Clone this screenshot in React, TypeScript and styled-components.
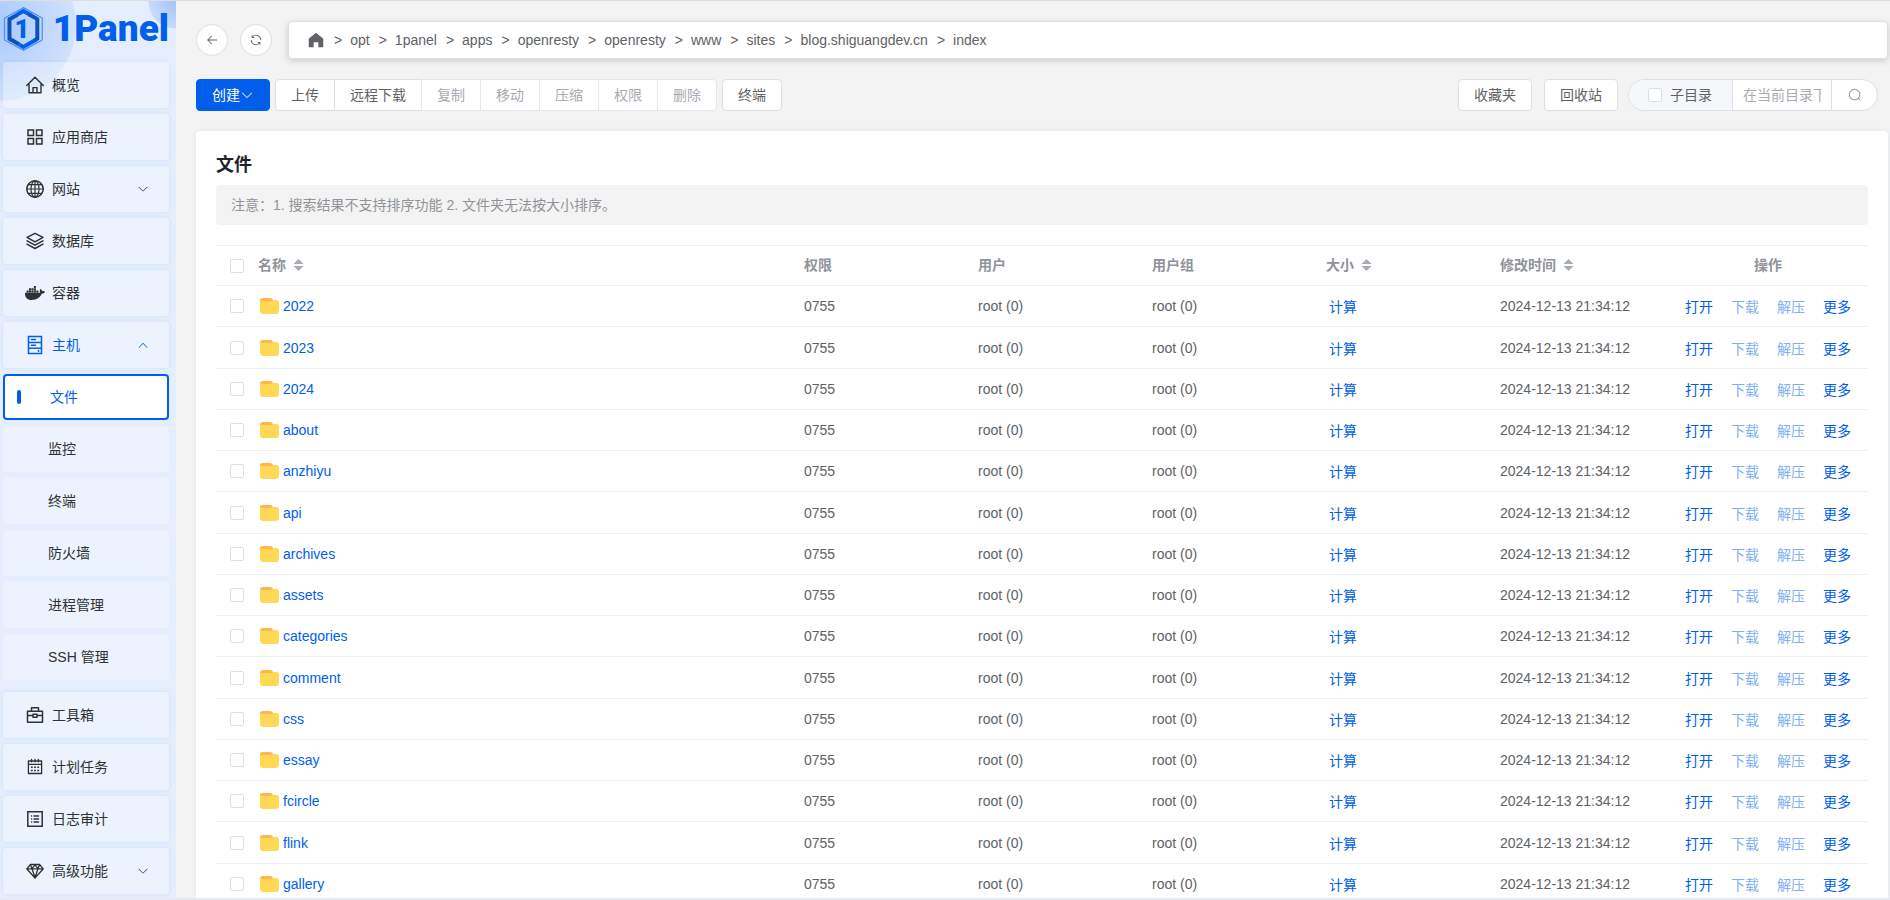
import React from "react";
import styled, { createGlobalStyle, css } from "styled-components";
import { FaDocker } from "react-icons/fa";

const BLUE = "#005eeb";
const BORDER = "#dcdfe6";
const LINE = "#ebeef5";
const TEXT = "#606266";

const GlobalStyle = createGlobalStyle`
  *, *::before, *::after { box-sizing: border-box; }
  body {
    margin: 0;
    background: #f3f3f3;
    color: ${TEXT};
    font: 14px/20px "Liberation Sans", "Noto Sans CJK SC", sans-serif;
  }
  button, input { font: inherit; color: inherit; }
  a { color: inherit; text-decoration: none; }
`;

/* ---------- shell ---------- */

const Shell = styled.div`
  display: flex;
  height: 100vh;
  overflow: hidden;
  border-top: 1px solid #dedede;
  border-bottom: 2px solid #e6e9f1;
`;

const Sidebar = styled.aside`
  flex: none;
  width: 176px;
  display: flex;
  flex-direction: column;
  padding: 0 7px 0 3px;
  background:
    radial-gradient(circle at 100% 0, rgba(110, 160, 248, 0.55), rgba(110, 160, 248, 0.25) 27px, transparent 28px) no-repeat,
    radial-gradient(circle at 0 24px, rgba(110, 165, 248, 0.5), rgba(110, 165, 248, 0.17) 75px, transparent 77px) no-repeat,
    #e4eefe;
`;

const Brand = styled.a`
  display: flex;
  align-items: center;
  gap: 9px;
  height: 55px;
  margin-bottom: 6px;
  color: ${BLUE};
  font: 900 37px/48px Roboto, "Liberation Sans", sans-serif;
`;

const Menu = styled.ul`
  display: flex;
  flex-direction: column;
  gap: 6px;
  margin: 0;
  padding: 0;
  list-style: none;
`;

const SubMenu = styled(Menu)`
  margin: 6px 0;
`;

const itemBase = css`
  display: flex;
  align-items: center;
  height: 46px;
  border-radius: 4px;
  background: rgba(255, 255, 255, 0.32);
  color: #303133;
`;

const MenuItem = styled.a<{ $open?: boolean }>`
  ${itemBase}
  padding: 0 20px 0 22px;
  box-shadow: 0 0 4px rgba(0, 94, 235, 0.1);
  ${(p) => p.$open && `color: ${BLUE};`}
  > svg:first-child { flex: none; margin-right: 7px; }
  > svg + span { flex: 1; }
`;

const SubItem = styled.a<{ $active?: boolean }>`
  ${itemBase}
  padding-left: 45px;
  ${(p) =>
    p.$active &&
    css`
      padding-left: 12px;
      border: 2px solid ${BLUE};
      background: #fff;
      color: ${BLUE};
      &::before {
        content: "";
        width: 4px;
        height: 14px;
        margin-right: 29px;
        border-radius: 2px;
        background: ${BLUE};
      }
    `}
`;

const Main = styled.main`
  flex: 1;
  min-width: 0;
  display: flex;
  flex-direction: column;
  padding: 20px 2px 0 20px;
`;

/* ---------- path bar ---------- */

const PathRow = styled.div`
  display: flex;
  align-items: center;
  gap: 12px;
`;

const RoundButton = styled.button`
  display: grid;
  place-items: center;
  width: 32px;
  height: 32px;
  padding: 0;
  border: 1px solid ${BORDER};
  border-radius: 50%;
  background: #fff;
`;

const Breadcrumb = styled.nav`
  flex: 1;
  display: flex;
  align-items: center;
  gap: 8px;
  height: 38px;
  margin-left: 4px;
  padding: 0 18px;
  border: 1px solid ${BORDER};
  border-radius: 4px;
  background: #fff;
  box-shadow: 0 2px 6px rgba(0, 0, 0, 0.16);
  svg { display: block; }
`;

const Separator = styled.span`
  padding-left: 1px;
`;

/* ---------- toolbar ---------- */

const Toolbar = styled.div`
  display: flex;
  justify-content: space-between;
  margin: 20px 10px 20px 0;
`;

const Group = styled.div<{ $gap: number }>`
  display: flex;
  gap: ${(p) => p.$gap}px;
`;

const Button = styled.button<{ $primary?: boolean }>`
  display: flex;
  align-items: center;
  justify-content: center;
  height: 32px;
  padding: 0 15px;
  border: 1px solid ${BORDER};
  border-radius: 4px;
  background: #fff;
  color: ${TEXT};
  &:disabled { color: #a8abb2; border-color: #e4e7ed; }
  ${(p) => p.$primary && `background: ${BLUE}; border-color: ${BLUE}; color: #fff;`}
`;

const Joined = styled.div`
  display: flex;
  ${Button} { border-radius: 0; }
  ${Button} + ${Button} { margin-left: -1px; }
  ${Button}:first-child { border-radius: 4px 0 0 4px; }
  ${Button}:last-child { border-radius: 0 4px 4px 0; }
`;

const SearchBox = styled.div`
  display: flex;
  width: 250px;
  height: 32px;
  margin-left: -2px;
  border: 1px solid ${BORDER};
  border-radius: 16px;
  background: #fff;
  overflow: hidden;
`;

const SubDir = styled.label`
  flex: none;
  display: flex;
  align-items: center;
  gap: 8px;
  padding: 0 20px 0 19px;
  border-right: 1px solid ${BORDER};
  background: #f5f7fa;
`;

const SearchInput = styled.input`
  flex: 1;
  min-width: 0;
  padding: 0 10px;
  border: 0;
  outline: 0;
  background: none;
  &::placeholder { color: #a8abb2; opacity: 1; }
`;

const SearchButton = styled.button`
  flex: 0 0 46px;
  display: grid;
  place-items: center;
  padding: 0;
  border: 0;
  border-left: 1px solid ${BORDER};
  background: none;
`;

const Check = styled.input.attrs({ type: "checkbox" })`
  display: block;
  appearance: none;
  width: 14px;
  height: 14px;
  margin: 0;
  border: 1px solid ${BORDER};
  border-radius: 2px;
  background: #fff;
  &:checked { background: ${BLUE}; border-color: ${BLUE}; }
`;

/* ---------- file card ---------- */

const Card = styled.section`
  flex: 1;
  min-height: 0;
  overflow: hidden;
  padding: 20px 20px 0;
  border-radius: 4px 4px 0 0;
  background: #fff;
  box-shadow: 0 0 4px rgba(0, 94, 235, 0.1);
`;

const Title = styled.h1`
  margin: 0 0 6px;
  color: #1f2329;
  font-size: 18px;
  line-height: 28px;
`;

const Note = styled.p`
  margin: 0 0 20px;
  padding: 10px 15px;
  border-radius: 4px;
  background: #f3f3f3;
  color: #909399;
`;

const Table = styled.table`
  width: 100%;
  table-layout: fixed;
  border-collapse: separate;
  border-spacing: 0;
  border-top: 1px solid ${LINE};

  th, td {
    height: 41px;
    padding: 0 12px;
    border-bottom: 1px solid ${LINE};
    text-align: left;
    white-space: nowrap;
  }
  th { height: 40px; padding-bottom: 2px; color: #909399; }
  tbody tr:nth-child(4n + 2) td { height: 42px; }
  th:first-child, td:first-child { padding: 0 0 0 14px; }
  th:last-child { text-align: center; }
`;

const Col = styled.col<{ $w?: number }>`
  ${(p) => p.$w && `width: ${p.$w}px;`}
`;

const HeadLabel = styled.span`
  display: flex;
  align-items: center;
  gap: 7px;
`;

const FileName = styled.a`
  display: flex;
  align-items: center;
  gap: 4px;
  padding-left: 2px;
  color: ${BLUE};
`;

const LinkButton = styled.button`
  padding: 2px 3px 0;
  border: 0;
  background: none;
  color: ${BLUE};
  &:disabled { color: #80aff5; }
`;

const Actions = styled.div`
  display: flex;
  justify-content: center;
  gap: 12px;
`;

/* ---------- icons ---------- */

const Glyph = ({ d, size = 14, color = "currentColor" }: { d: string; size?: number; color?: string }) => (
  <svg width={size} height={size} viewBox="0 0 1024 1024" fill={color} aria-hidden="true">
    <path d={d} />
  </svg>
);

const ARROW_LEFT =
  "M224 480h640a32 32 0 1 1 0 64H224a32 32 0 0 1 0-64z m13.248 32 265.408 265.344a32 32 0 0 1-45.312 45.312l-288-288a32 32 0 0 1 0-45.312l288-288a32 32 0 1 1 45.312 45.312L237.248 512z";
const REFRESH =
  "M771.776 794.88A384 384 0 0 1 128 512h64a320 320 0 0 0 555.712 216.448H654.72a32 32 0 1 1 0-64h149.056a32 32 0 0 1 32 32v148.928a32 32 0 1 1-64 0v-50.56zM276.288 295.616h92.992a32 32 0 0 1 0 64H220.16a32 32 0 0 1-32-32V178.56a32 32 0 0 1 64 0v50.56A384 384 0 0 1 896.128 512h-64a320 320 0 0 0-555.776-216.384z";
const ARROW_DOWN =
  "M831.872 340.864 512 652.672 192.128 340.864a30.592 30.592 0 0 0-42.752 0 29.12 29.12 0 0 0 0 41.6L489.664 714.24a32 32 0 0 0 44.672 0l340.288-331.712a29.12 29.12 0 0 0 0-41.728 30.592 30.592 0 0 0-42.752 0z";
const ARROW_UP =
  "m488.832 344.32-339.84 356.672a32 32 0 0 0 0 44.16l.384.384a29.44 29.44 0 0 0 42.688 0l320-335.872 319.872 335.872a29.44 29.44 0 0 0 42.688 0l.384-.384a32 32 0 0 0 0-44.16L535.168 344.32a32 32 0 0 0-46.336 0z";
const SEARCH =
  "m795.904 750.72 124.992 124.928a32 32 0 0 1-45.248 45.248L750.656 795.904a416 416 0 1 1 45.248-45.248zM480 832a352 352 0 1 0 0-704 352 352 0 0 0 0 704z";

const Line = ({ children, w = 1.3 }: { children: React.ReactNode; w?: number }) => (
  <svg width="20" height="20" viewBox="0 0 20 20" fill="none" stroke="currentColor" strokeWidth={w} strokeLinejoin="round" strokeLinecap="round" aria-hidden="true">
    {children}
  </svg>
);

const HomeIcon = () => (
  <Line w={1.4}>
    <path d="M1.7 10.6 10 2.2l8.3 8.4M4 9v8.8h12V9M8 17.6v-5h4v5" />
  </Line>
);
const AppsIcon = () => (
  <Line w={1.5}>
    <path strokeLinejoin="miter" d="M3 3h5.5v5.5H3zM11.5 3H17v5.5h-5.5zM3 11.5h5.5V17H3zM11.5 11.5H17V17h-5.5z" />
  </Line>
);
const GlobeIcon = () => (
  <Line w={1.2}>
    <circle cx="10" cy="10" r="8.2" strokeWidth="1.5" />
    <ellipse cx="10" cy="10" rx="4" ry="8.2" />
    <path d="M1.8 10h16.4M10 1.8v16.4M3.1 5.6h13.8M3.1 14.4h13.8" />
  </Line>
);
const LayersIcon = () => (
  <Line w={1.5}>
    <path d="M10 2.3 18 6.4 10 10.8 2 6.4zM2 9.9l8 4.3 8-4.3M2 13.2l8 4.3 8-4.3" />
  </Line>
);
const HostIcon = () => (
  <Line w={1.5}>
    <path strokeLinejoin="miter" d="M3.5 1.5h13v17h-13zM3.5 7.4h13M3.5 13.2h13M6.5 4.6h4M6.5 10.3h4" />
    <path d="M13.5 16h.1" strokeWidth="1.8" />
  </Line>
);
const ToolboxIcon = () => (
  <Line w={1.5}>
    <path d="M2.5 6.2h15v11h-15zM6.5 6V2.8h7V6M2.7 10.6h4.8M12.5 10.6h4.8M8 9.2h4v3H8z" />
  </Line>
);
const CalendarIcon = () => (
  <Line w={1.3}>
    <path d="M3.4 4h13.2v12.5H3.4zM3.4 7.4h13.2M6.6 2.4v2.4M10 2.4v2.4M13.4 2.4v2.4" />
    <path strokeWidth="1.6" strokeLinecap="butt" strokeDasharray="1.8 1.4" d="M5.9 10.3h8.4M5.9 13.5h8.4" />
  </Line>
);
const LogIcon = () => (
  <Line w={1.5}>
    <path strokeLinejoin="miter" d="M2.8 2.8h14.4v14.4H2.8z" />
    <path strokeWidth="1.3" d="M9 7h4.6M9 10h4.6M9 13h4.6M6.5 7h.2M6.5 10h.2M6.5 13h.2" />
  </Line>
);
const GemIcon = () => (
  <Line w={1.3}>
    <path d="M5.4 3.5h9.2l3.7 4.3L10 17 1.7 7.8zM1.9 7.8h16.2M5.4 3.8l1.6 4L10 16.5 13 7.8l1.6-4M7 7.6l3-3.8 3 3.8" />
  </Line>
);

const BrandMark = () => (
  <svg width="41" height="46" viewBox="0 0 41 46" fill="none" aria-hidden="true">
    <path d="M20.5 1.5 39.5 12v22L20.5 44.5 1.500 34V12z" stroke="#4a8cf2" strokeWidth="1.2" />
    <path d="M14.5 8.6 6.5 13.2V32.800l10 5.700" stroke="#0b52bd" strokeWidth="4" />
    <path d="M14 8.600 20.500 5l8 4.500" stroke={BLUE} strokeWidth="4" />
    <path d="M26 8.200 34.500 13v19.800L31 35" stroke="#0b52bd" strokeWidth="4" />
    <path d="M33.500 33.500 20.500 41l-4-2.300" stroke={BLUE} strokeWidth="4" />
    <text x="19" y="32" textAnchor="middle" fill={BLUE} fontFamily="Roboto" fontWeight="900" fontSize="26">1</text>
  </svg>
);

const FolderIcon = () => (
  <svg width="19" height="16" viewBox="0 0 19 16" aria-hidden="true">
    <path d="M0 3Q0 0 2.500 0H10q1.500 0 2.500 1.200L14 3v5H0z" fill="#ffb74d" />
    <path d="M0 3h11.500l1.500-1h3.500Q19 2 19 4.500V12.500q0 3.500-3 3.500H3q-3 0-3-3.500z" fill="#ffd955" />
  </svg>
);

const SortIcon = () => (
  <svg width="11" height="12" viewBox="0 0 11 12" fill="#a8abb2" aria-hidden="true">
    <path d="M5.500 0 10.500 5H.5zM5.500 12 .5 7h10z" />
  </svg>
);

/* ---------- data ---------- */

const topItems: { label: string; icon: React.ReactNode; arrow?: string; open?: boolean }[] = [
  { label: "概览", icon: <HomeIcon /> },
  { label: "应用商店", icon: <AppsIcon /> },
  { label: "网站", icon: <GlobeIcon />, arrow: ARROW_DOWN },
  { label: "数据库", icon: <LayersIcon /> },
  { label: "容器", icon: <FaDocker size={20} /> },
  { label: "主机", icon: <HostIcon />, arrow: ARROW_UP, open: true },
];
const hostItems = ["文件", "监控", "终端", "防火墙", "进程管理", "SSH 管理"];
const bottomItems = [
  { label: "工具箱", icon: <ToolboxIcon /> },
  { label: "计划任务", icon: <CalendarIcon /> },
  { label: "日志审计", icon: <LogIcon /> },
  { label: "高级功能", icon: <GemIcon />, arrow: ARROW_DOWN },
];
const crumbs = ["opt", "1panel", "apps", "openresty", "openresty", "www", "sites", "blog.shiguangdev.cn", "index"];
const batchActions = ["复制", "移动", "压缩", "权限", "删除"];
const files = [
  "2022", "2023", "2024", "about", "anzhiyu", "api", "archives", "assets",
  "categories", "comment", "css", "essay", "fcircle", "flink", "gallery",
];

const renderItem = (item: (typeof topItems)[number]) => (
  <MenuItem href="#" $open={item.open}>
    {item.icon}
    <span>{item.label}</span>
    {item.arrow && <Glyph d={item.arrow} size={12} />}
  </MenuItem>
);

export default function App() {
  return (
    <>
      <GlobalStyle />
      <Shell>
        <Sidebar>
          <Brand href="#">
            <BrandMark />
            <span>1Panel</span>
          </Brand>
          <Menu>
            {topItems.map((item) => (
              <li key={item.label}>
                {renderItem(item)}
                {item.open && (
                  <SubMenu>
                    {hostItems.map((label, i) => (
                      <li key={label}>
                        <SubItem href="#" $active={i === 0}>{label}</SubItem>
                      </li>
                    ))}
                  </SubMenu>
                )}
              </li>
            ))}
            {bottomItems.map((item) => (
              <li key={item.label}>{renderItem(item)}</li>
            ))}
          </Menu>
        </Sidebar>

        <Main>
          <PathRow>
            <RoundButton aria-label="返回"><Glyph d={ARROW_LEFT} /></RoundButton>
            <RoundButton aria-label="刷新"><Glyph d={REFRESH} /></RoundButton>
            <Breadcrumb>
              <a href="#" aria-label="根目录">
                <Glyph d="M512 100 100 440V930h280V640h264v290h280V440z" size={18} />
              </a>
              {crumbs.map((name, i) => (
                <React.Fragment key={i}>
                  <Separator>&gt;</Separator>
                  <a href="#">{name}</a>
                </React.Fragment>
              ))}
            </Breadcrumb>
          </PathRow>

          <Toolbar>
            <Group $gap={5}>
              <Button $primary>创建<Glyph d={ARROW_DOWN} /></Button>
              <Joined>
                <Button>上传</Button>
                <Button>远程下载</Button>
                {batchActions.map((label) => (
                  <Button key={label} disabled>{label}</Button>
                ))}
              </Joined>
              <Button>终端</Button>
            </Group>
            <Group $gap={12}>
              <Button>收藏夹</Button>
              <Button>回收站</Button>
              <SearchBox>
                <SubDir><Check />子目录</SubDir>
                <SearchInput aria-label="搜索" placeholder="在当前目录下查找" />
                <SearchButton aria-label="查找"><Glyph d={SEARCH} color="#909399" /></SearchButton>
              </SearchBox>
            </Group>
          </Toolbar>

          <Card>
            <Title>文件</Title>
            <Note>注意：1. 搜索结果不支持排序功能 2. 文件夹无法按大小排序。</Note>
            <Table>
              <colgroup>
                <Col $w={30} />
                <Col />
                <Col $w={174} />
                <Col $w={174} />
                <Col $w={174} />
                <Col $w={174} />
                <Col $w={180} />
                <Col $w={200} />
              </colgroup>
              <thead>
                <tr>
                  <th><Check aria-label="全选" /></th>
                  <th><HeadLabel>名称<SortIcon /></HeadLabel></th>
                  <th>权限</th>
                  <th>用户</th>
                  <th>用户组</th>
                  <th><HeadLabel>大小<SortIcon /></HeadLabel></th>
                  <th><HeadLabel>修改时间<SortIcon /></HeadLabel></th>
                  <th>操作</th>
                </tr>
              </thead>
              <tbody>
                {files.map((name) => (
                  <tr key={name}>
                    <td><Check aria-label={name} /></td>
                    <td><FileName href="#"><FolderIcon />{name}</FileName></td>
                    <td>0755</td>
                    <td>root (0)</td>
                    <td>root (0)</td>
                    <td><LinkButton>计算</LinkButton></td>
                    <td>2024-12-13 21:34:12</td>
                    <td>
                      <Actions>
                        <LinkButton>打开</LinkButton>
                        <LinkButton disabled>下载</LinkButton>
                        <LinkButton disabled>解压</LinkButton>
                        <LinkButton>更多</LinkButton>
                      </Actions>
                    </td>
                  </tr>
                ))}
              </tbody>
            </Table>
          </Card>
        </Main>
      </Shell>
    </>
  );
}
